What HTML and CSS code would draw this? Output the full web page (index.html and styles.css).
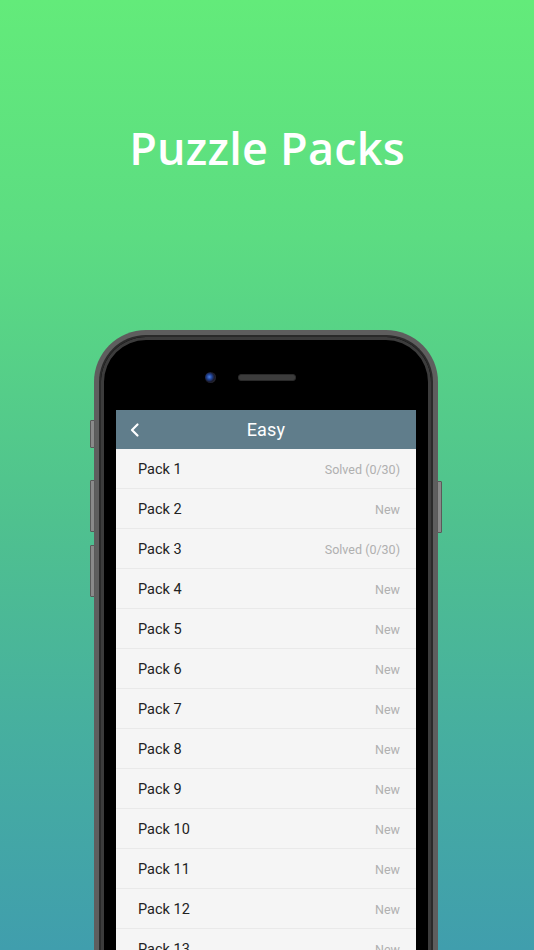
FILE: index.html
```html
<!DOCTYPE html>
<html>
<head>
<meta charset="utf-8">
<link rel="stylesheet" href="styles.css">
</head>
<body>
<div class="page">
  <h1 class="title">Puzzle Packs</h1>
  <div class="phone">
    <span class="btn btn-mute"></span>
    <span class="btn btn-volup"></span>
    <span class="btn btn-voldown"></span>
    <span class="btn btn-power"></span>
    <div class="bezel">
      <div class="top">
        <span class="camera"></span>
        <span class="speaker"></span>
      </div>
      <div class="screen">
        <div class="nav">
          <svg class="back" width="12" height="16" viewBox="0 0 12 16"><path d="M8.5 2.5 L3 8 L8.5 13.5" fill="none" stroke="#fff" stroke-width="2.2" stroke-linecap="round" stroke-linejoin="round"/></svg>
          <span class="nav-title">Easy</span>
        </div>
        <ul class="list">
          <li><span class="name">Pack 1</span><span class="status">Solved (0/30)</span></li>
          <li><span class="name">Pack 2</span><span class="status">New</span></li>
          <li><span class="name">Pack 3</span><span class="status">Solved (0/30)</span></li>
          <li><span class="name">Pack 4</span><span class="status">New</span></li>
          <li><span class="name">Pack 5</span><span class="status">New</span></li>
          <li><span class="name">Pack 6</span><span class="status">New</span></li>
          <li><span class="name">Pack 7</span><span class="status">New</span></li>
          <li><span class="name">Pack 8</span><span class="status">New</span></li>
          <li><span class="name">Pack 9</span><span class="status">New</span></li>
          <li><span class="name">Pack 10</span><span class="status">New</span></li>
          <li><span class="name">Pack 11</span><span class="status">New</span></li>
          <li><span class="name">Pack 12</span><span class="status">New</span></li>
          <li><span class="name">Pack 13</span><span class="status">New</span></li>
        </ul>
      </div>
    </div>
  </div>
</div>
</body>
</html>
```
FILE: styles.css
```css
html, body {
  margin: 0;
  padding: 0;
}
body {
  width: 534px;
  height: 950px;
  overflow: hidden;
  background: linear-gradient(180deg, #63eb7a 0%, #5cdc82 25%, #4fc18f 55%, #46aea0 78%, #409ead 100%);
  font-family: Roboto, "Noto Sans", sans-serif;
}
.page {
  display: flex;
  flex-direction: column;
  align-items: center;
}
.title {
  margin: 0;
  padding-top: 120px;
  height: 330px;
  box-sizing: border-box;
  font-family: "Open Sans", Lato, sans-serif;
  font-weight: 600;
  font-size: 45px;
  line-height: 56px;
  color: #ffffff;
  letter-spacing: 0.2px;
}
.phone {
  position: relative;
  width: 344px;
  height: 660px;
  margin-left: -2px;
  box-sizing: border-box;
  border-radius: 52px 52px 0 0;
  background: #5e5e5e;
  padding: 5px 5px 0 5px;
}
.btn {
  position: absolute;
  width: 3px;
  background: #8a8a8a;
  border: 1px solid #5a5a5a;
  border-radius: 1px;
}
.btn-mute { left: -4px; top: 90px; height: 26px; }
.btn-volup { left: -4px; top: 150px; height: 50px; }
.btn-voldown { left: -4px; top: 215px; height: 50px; }
.btn-power { right: -4px; top: 151px; height: 50px; }
.bezel {
  height: 100%;
  box-sizing: border-box;
  border-radius: 47px 47px 0 0;
  background: #000;
  border: 2px solid #2a2a2a;
  border-bottom: none;
  box-shadow: inset 0 0 0 3px #3c3c3c;
  padding: 0 15px;
  display: flex;
  flex-direction: column;
}
.top {
  height: 73px;
  display: flex;
  align-items: center;
  justify-content: flex-start;
  gap: 22px;
  padding: 7px 0 0 89px;
  box-sizing: border-box;
}
.camera {
  width: 11px;
  height: 11px;
  border-radius: 50%;
  background: radial-gradient(circle at 40% 45%, #4a82e8 0%, #1f4090 30%, #1a1a2a 55%, #3a3a3a 100%);
}
.speaker {
  width: 56px;
  height: 5px;
  border-radius: 3px;
  background: #3c3c3c;
  border: 1px solid #2a2a2a;
}
.screen {
  flex: 1;
  background: #f5f5f5;
}
.nav {
  position: relative;
  height: 39px;
  background: #607d8b;
  display: flex;
  align-items: center;
  justify-content: center;
}
.back {
  position: absolute;
  left: 13px;
  top: 12px;
}
.nav-title {
  color: #ffffff;
  font-size: 18px;
  letter-spacing: 0.2px;
}
.list {
  list-style: none;
  margin: 0;
  padding: 0;
}
.list li {
  box-sizing: border-box;
  height: 40px;
  border-bottom: 1px solid #e9e9e9;
  display: flex;
  align-items: center;
  justify-content: space-between;
  padding: 1px 16px 0 22px;
}
.name {
  font-size: 14.5px;
  color: #222222;
}
.status {
  font-size: 12.5px;
  color: #b0b0b0;
}
```
